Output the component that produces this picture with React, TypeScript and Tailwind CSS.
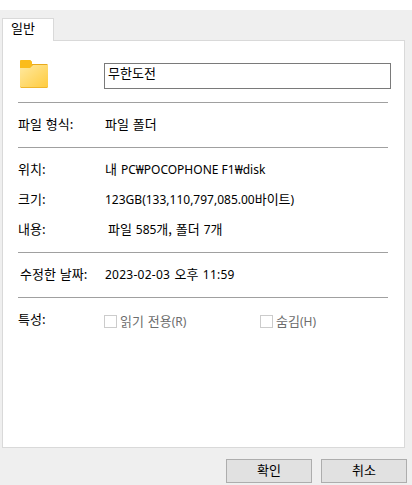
import type { ReactNode } from "react";

function Latin({ children, className = "" }: { children: ReactNode; className?: string }) {
  return <span className={`font-['Noto_Sans','Noto_Sans_CJK_KR',sans-serif] text-[12px] ${className}`}>{children}</span>;
}

function Row({ label, labelClass = "", className = "h-[30px]", children }: { label: string; labelClass?: string; className?: string; children: ReactNode }) {
  return (
    <div className={`flex items-center pb-[2px] [word-spacing:1px] ${className}`}>
      <div className={`w-[87px] shrink-0 ${labelClass}`}>{label}</div>
      <div className="whitespace-pre">{children}</div>
    </div>
  );
}

function Divider() {
  return <div className="h-px w-[370px] bg-[#a0a0a0]" />;
}

function Check({ label, mnemonic }: { label: string; mnemonic: string }) {
  return (
    <label className="flex w-[156px] shrink-0 items-center text-[#6d6d6d] [word-spacing:1px]">
      <span className="mr-[3px] size-[13px] shrink-0 border border-[#cccccc] bg-white" />
      <span className="whitespace-pre">
        {label}
        <Latin>{mnemonic}</Latin>
      </span>
    </label>
  );
}

function DialogButton({ children }: { children: ReactNode }) {
  return <button className="flex h-6 w-[86px] items-center justify-center border border-[#adadad] bg-[#e1e1e1] pb-[3px]">{children}</button>;
}

function FolderIcon() {
  return (
    <svg className="mt-[19px] ml-[2px] h-[28px] w-[28px] shrink-0" viewBox="0 0 28 28">
      <defs>
        <linearGradient id="folder" x1="0" y1="0" x2="1" y2="1">
          <stop offset="0" stopColor="#ffe9a0" />
          <stop offset="1" stopColor="#ffcb3d" />
        </linearGradient>
      </defs>
      <path d="M1 0H10L12 2V4H27L28 5V10H0V1Z" fill="#e8a91c" />
      <path d="M1 0H10L12 2V6L10 8H0V1Z" fill="#fbbc1b" />
      <path d="M0 8H10L13 5H28V27L27 28H1L0 27Z" fill="url(#folder)" />
      <path d="M0 26.5L1 27.5H27L28 26.5" fill="none" stroke="#efb52c" />
    </svg>
  );
}

export default function App() {
  return (
    <div className="h-[485px] w-[412px] overflow-hidden bg-white pt-[10px] font-['Noto_Sans_CJK_KR',sans-serif] text-[13px] leading-[18px] font-normal text-black">
      <div className="h-[475px] bg-[#efefef] pt-2 pl-[2px]">
        <div className="flex h-[23px] w-[403px]">
          <div className="w-[52px] border-t border-r border-l border-[#d9d9d9] bg-white pl-[8px] leading-[17px]">일반</div>
          <div className="flex-1 border-b border-[#d9d9d9]" />
        </div>
        <div className="h-[407px] w-[403px] border-r border-b border-l border-[#d9d9d9] bg-white pl-[15px]">
          <div className="flex h-[61px]">
            <FolderIcon />
            <div className="mt-[22px] ml-[56px] h-[26px] w-[287px] border border-[#7a7a7a] pl-[3px] leading-[17px]">무한도전</div>
          </div>
          <Divider />
          <Row label="파일 형식:" className="h-11">파일 폴더</Row>
          <Divider />
          <div className="h-[104px] pt-[7px]">
            <Row label="위치:">내 <Latin className="[word-spacing:0px]">PC₩POCOPHONE F1₩disk</Latin></Row>
            <Row label="크기:"><Latin>123GB(133,110,797,085.00</Latin>바이트<Latin>)</Latin></Row>
            <Row label="내용:"><span className="[word-spacing:0px]"> </span>파일 <Latin>585</Latin>개, 폴더 <Latin>7</Latin>개</Row>
          </div>
          <Divider />
          <Row label="수정한 날짜:" labelClass="pl-[2px]" className="h-11"><Latin className="tracking-[0.25px]">2023-02-03 </Latin>오후<Latin className="tracking-[0.25px]"> 11:59</Latin></Row>
          <Divider />
          <div className="flex h-[44px] items-center">
            <div className="w-[86px] shrink-0 pb-[2px]">특성:</div>
            <div className="flex pt-[3px]">
              <Check label="읽기 전용" mnemonic="(R)" />
              <Check label="숨김" mnemonic="(H)" />
            </div>
          </div>
        </div>
        <div className="mt-[11px] flex justify-end gap-[9px] pr-[5px]">
          <DialogButton>확인</DialogButton>
          <DialogButton>취소</DialogButton>
        </div>
      </div>
    </div>
  );
}
